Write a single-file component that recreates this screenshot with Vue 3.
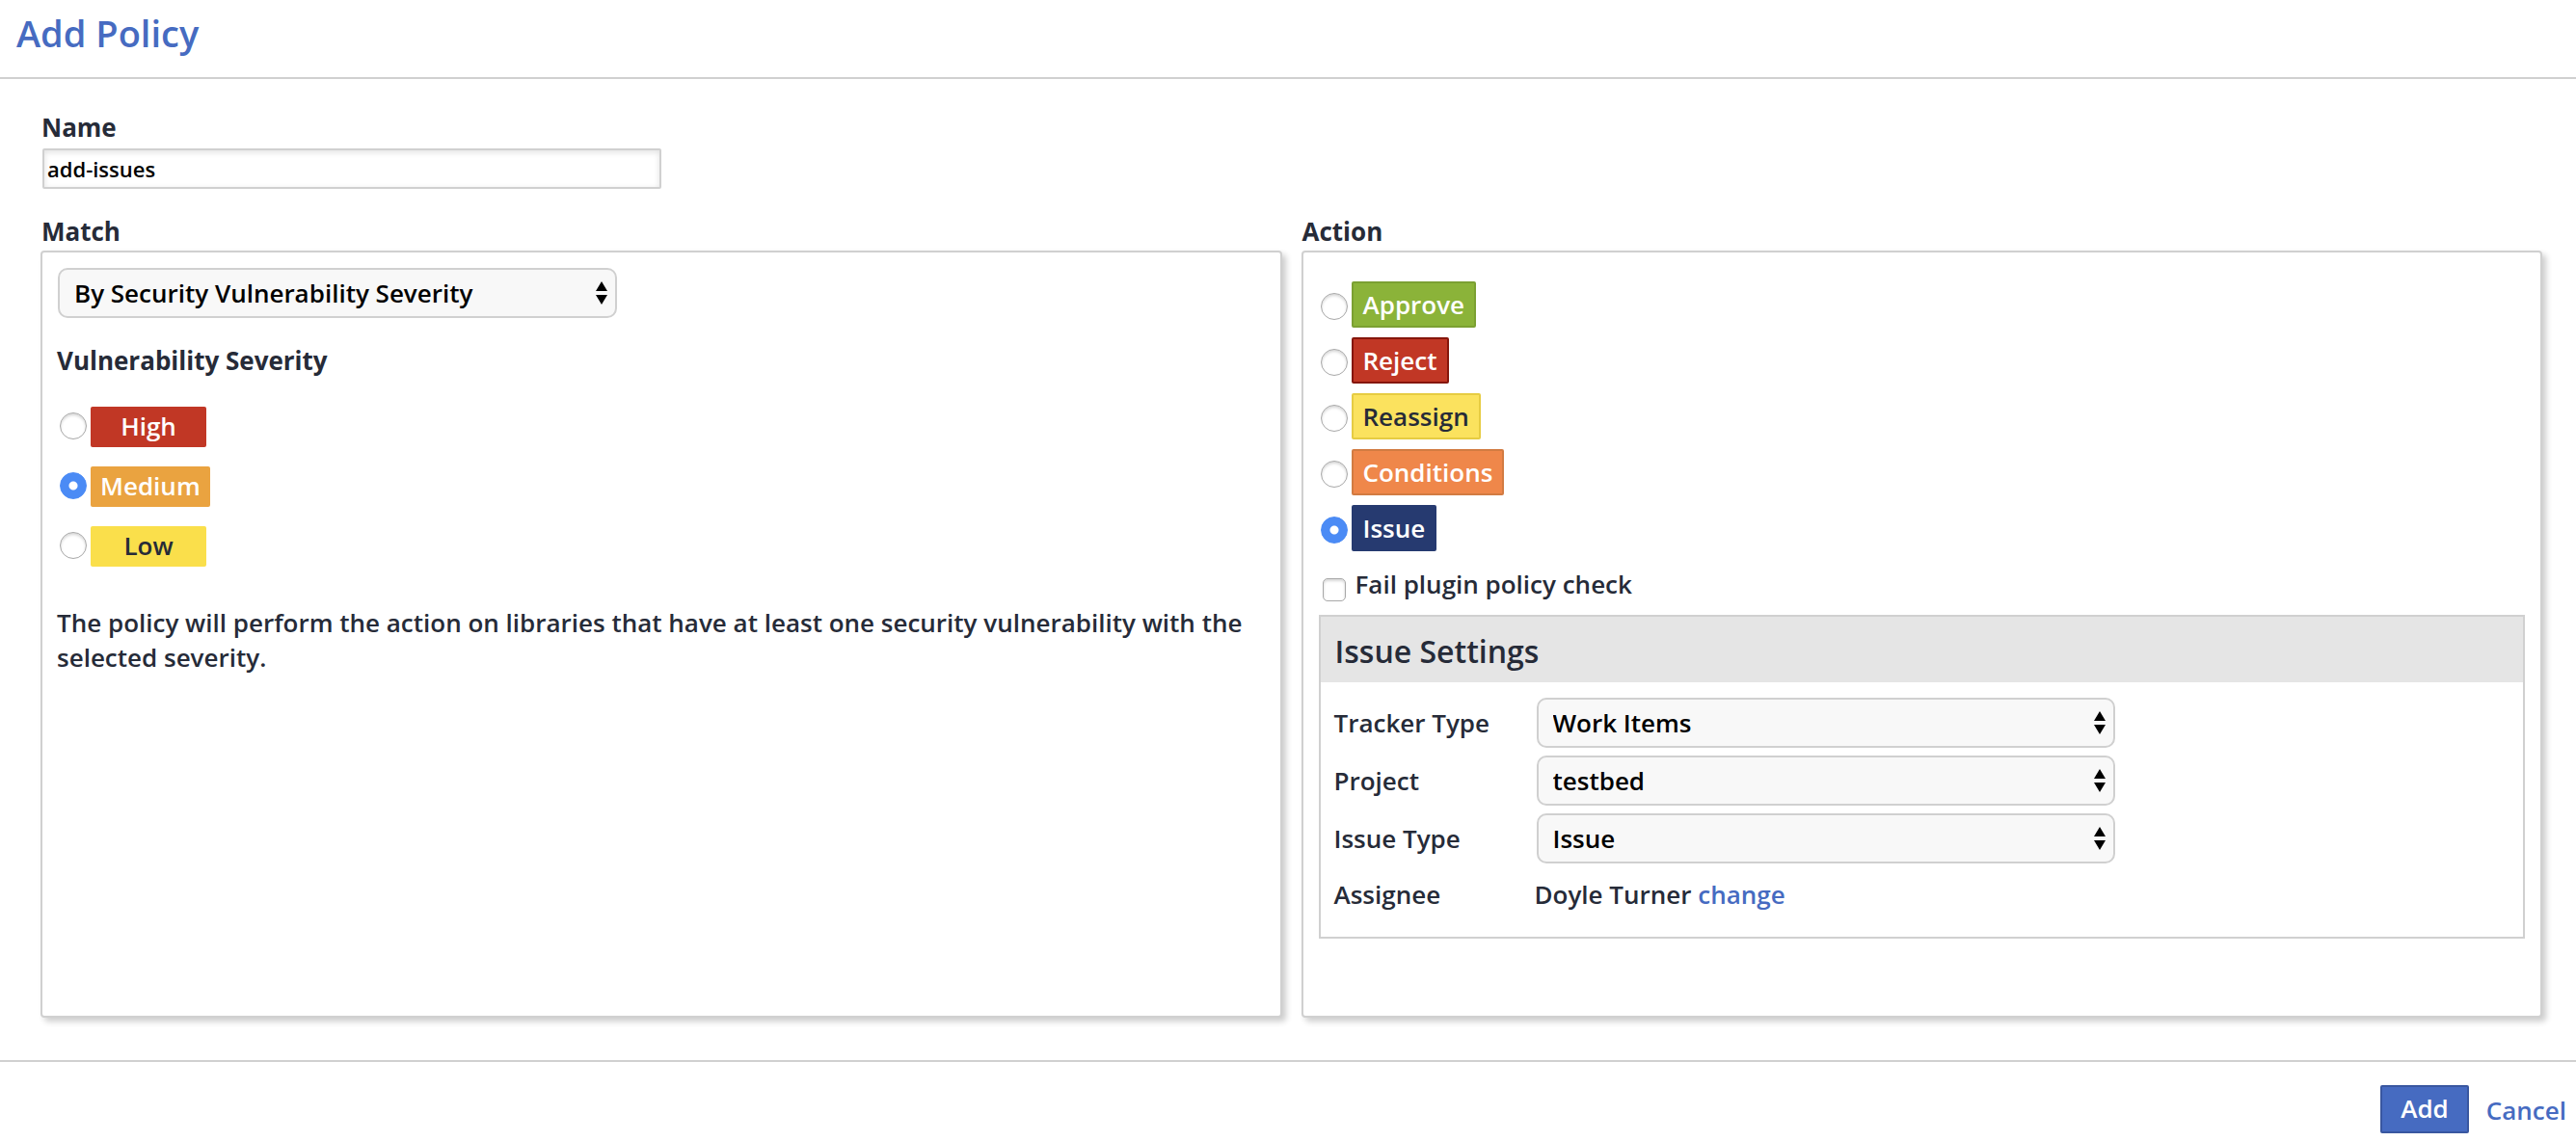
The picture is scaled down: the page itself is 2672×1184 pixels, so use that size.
<script setup>
import { ref } from 'vue'

const name = ref('add-issues')
const matchType = ref('By Security Vulnerability Severity')
const severity = ref('medium')
const action = ref('issue')
const failCheck = ref(false)

const severities = [
  { id: 'high', label: 'High' },
  { id: 'medium', label: 'Medium' },
  { id: 'low', label: 'Low' },
]

const actions = [
  { id: 'approve', label: 'Approve' },
  { id: 'reject', label: 'Reject' },
  { id: 'reassign', label: 'Reassign' },
  { id: 'conditions', label: 'Conditions' },
  { id: 'issue', label: 'Issue' },
]

const issueFields = ref([
  { id: 'tracker-type', label: 'Tracker Type', value: 'Work Items' },
  { id: 'project', label: 'Project', value: 'testbed' },
  { id: 'issue-type', label: 'Issue Type', value: 'Issue' },
])
</script>

<template>
  <form class="dialog" @submit.prevent>
    <header class="dialog-header">
      <h1>Add Policy</h1>
    </header>

    <main class="dialog-body">
      <div class="name-field">
        <label class="caption" for="policy-name">Name</label>
        <input id="policy-name" v-model="name" class="text-input" type="text" />
      </div>

      <div class="columns">
        <section class="column">
          <h2 class="caption">Match</h2>
          <div class="panel match-panel">
            <div class="select-box match-select">
              <select v-model="matchType" aria-label="Match type">
                <option>{{ matchType }}</option>
              </select>
              <svg class="arrows" viewBox="0 0 12 24" aria-hidden="true">
                <path d="M6 0 12 10H0ZM6 24 0 14H12Z" />
              </svg>
            </div>
            <h3 class="caption severity-title">Vulnerability Severity</h3>
            <div class="severity-list">
              <label v-for="item in severities" :key="item.id" class="choice severity-choice">
                <input v-model="severity" type="radio" name="severity" :value="item.id" />
                <span class="severity" :class="item.id">{{ item.label }}</span>
              </label>
            </div>
            <p class="hint">
              The policy will perform the action on libraries that have at least one security
              vulnerability with the selected severity.
            </p>
          </div>
        </section>

        <section class="column">
          <h2 class="caption">Action</h2>
          <div class="panel action-panel">
            <div class="action-list">
              <label v-for="item in actions" :key="item.id" class="choice action-choice">
                <input v-model="action" type="radio" name="action" :value="item.id" />
                <span class="action" :class="item.id">{{ item.label }}</span>
              </label>
            </div>
            <label class="check">
              <input v-model="failCheck" type="checkbox" />
              <span>Fail plugin policy check</span>
            </label>

            <div class="settings">
              <h3 class="settings-title">Issue Settings</h3>
              <div class="settings-body">
                <div v-for="field in issueFields" :key="field.id" class="settings-row">
                  <label :for="field.id">{{ field.label }}</label>
                  <div class="select-box">
                    <select :id="field.id" v-model="field.value">
                      <option>{{ field.value }}</option>
                    </select>
                    <svg class="arrows" viewBox="0 0 12 24" aria-hidden="true">
                      <path d="M6 0 12 10H0ZM6 24 0 14H12Z" />
                    </svg>
                  </div>
                </div>
                <div class="settings-row assignee">
                  <span>Assignee</span>
                  <span>Doyle Turner <a href="#">change</a></span>
                </div>
              </div>
            </div>
          </div>
        </section>
      </div>
    </main>

    <footer class="dialog-footer">
      <button class="add" type="submit">Add</button>
      <a class="cancel" href="#">Cancel</a>
    </footer>
  </form>
</template>

<style>
body {
  background: #fff;
}
</style>

<style scoped>
.dialog,
.dialog * {
  box-sizing: border-box;
}

.dialog {
  color: #262b38;
  font: 600 26px/36px "Open Sans", "Noto Sans", sans-serif;
}

h1,
h2,
h3,
p {
  margin: 0;
}

input,
select,
button {
  margin: 0;
  font: inherit;
}

a {
  color: #466bc1;
  text-decoration: none;
}

.dialog-header {
  padding: 2px 17px 14px;
  border-bottom: 2px solid #d0d0d0;
}

h1 {
  color: #466bc1;
  font-size: 38px;
  font-weight: 600;
  line-height: 64px;
}

.dialog-body {
  padding: 32px 35px 44px 42px;
}

.name-field {
  display: flex;
  flex-direction: column;
  align-items: flex-start;
  gap: 4px;
  margin-bottom: 26px;
}

.caption {
  padding-left: 1px;
  font-size: 26px;
  font-weight: 700;
  line-height: 36px;
}

.text-input {
  width: 642px;
  max-width: 100%;
  height: 42px;
  margin-left: 2px;
  padding: 0 3px;
  border: 2px solid #d0d0d0;
  border-radius: 2px;
  outline: none;
  background: #fff;
  box-shadow: inset 0 2px 6px rgba(0, 0, 0, 0.12);
  color: #000;
  font-size: 22px;
}

.columns {
  display: grid;
  grid-template-columns: 1fr 1fr;
  gap: 20px;
}

.column {
  display: flex;
  flex-direction: column;
  gap: 2px;
}

.panel {
  flex: 1;
  min-height: 796px;
  border: 2px solid #d0d0d0;
  border-radius: 4px;
  background: #fff;
  box-shadow: 4px 4px 6px rgba(0, 0, 0, 0.2);
}

.match-panel {
  padding: 16px 14px;
}

.action-panel {
  padding: 30px 16px;
}

.select-box {
  position: relative;
  width: 600px;
  max-width: 100%;
  margin-left: 2px;
}

.match-select {
  width: 580px;
}

select {
  display: block;
  width: 100%;
  height: 52px;
  padding: 0 40px 0 15px;
  border: 2px solid #d0d0d0;
  border-radius: 10px;
  appearance: none;
  background: #f8f8f8;
  color: #000;
}

.arrows {
  position: absolute;
  top: 14px;
  right: 10px;
  width: 12px;
  height: 24px;
  pointer-events: none;
}

.severity-title {
  margin: 26px 0 30px;
}

.severity-list,
.action-list {
  display: flex;
  flex-direction: column;
  align-items: flex-start;
}

.severity-list {
  gap: 20px;
  margin-left: 4px;
}

.action-list {
  gap: 10px;
  margin-left: 2px;
}

.choice {
  display: flex;
  align-items: center;
  gap: 4px;
}

input[type="radio"],
input[type="checkbox"] {
  flex: none;
  border: 1px solid #a8a8a8;
  appearance: none;
  background: #fff;
  box-shadow: inset 0 2px 3px rgba(0, 0, 0, 0.16);
}

input[type="radio"] {
  width: 28px;
  height: 28px;
  border-radius: 50%;
}

input[type="radio"]:checked {
  border-color: #4b8bf5;
  background: radial-gradient(circle, #fff 0 4px, #4b8bf5 5px);
  box-shadow: none;
}

.severity-choice input {
  margin-bottom: 2px;
}

.action-choice input {
  margin-top: 4px;
}

input[type="checkbox"] {
  width: 24px;
  height: 24px;
  border-radius: 5px;
}

.severity,
.action {
  border-radius: 2px;
  color: #fff;
  text-align: center;
}

.severity {
  min-width: 120px;
  padding: 0 10px 2px;
  line-height: 40px;
}

.action {
  padding: 0 10px;
  border: 2px solid;
  line-height: 44px;
}

.severity.high {
  background: #c13725;
}

.severity.medium {
  background: #eaa340;
}

.severity.low {
  background: #fadf4b;
  color: #262b38;
}

.action.approve {
  border-color: #7ba032;
  background: #8bb339;
}

.action.reject {
  border-color: #85160b;
  background: #c13725;
}

.action.reassign {
  border-color: #e6cc42;
  background: #fbe25e;
  color: #262b38;
}

.action.conditions {
  border-color: #d27b42;
  background: #ef874a;
}

.action.issue {
  border-color: #263a70;
  background: #263a70;
}

.hint {
  margin-top: 40px;
  padding-left: 1px;
}

.check {
  display: flex;
  align-items: flex-end;
  gap: 10px;
  margin: 16px 0 14px 4px;
}

.settings {
  border: 2px solid #d0d0d0;
}

.settings-title {
  padding: 4px 15px 0;
  background: #e5e5e5;
  font-size: 32px;
  font-weight: 600;
  line-height: 64px;
}

.settings-body {
  display: flex;
  flex-direction: column;
  gap: 8px;
  padding: 16px 14px 26px;
}

.settings-row {
  display: grid;
  grid-template-columns: 208px 1fr;
  align-items: center;
}

.assignee {
  margin-top: 6px;
}

.dialog-footer {
  display: flex;
  align-items: flex-start;
  justify-content: flex-end;
  gap: 18px;
  padding: 24px 10px 8px;
  border-top: 2px solid #d0d0d0;
}

.add {
  height: 50px;
  padding: 0 19px 2px;
  border: 2px solid #3957a0;
  border-radius: 2px;
  background: #466bc1;
  color: #fff;
}

.cancel {
  line-height: 52px;
}
</style>
